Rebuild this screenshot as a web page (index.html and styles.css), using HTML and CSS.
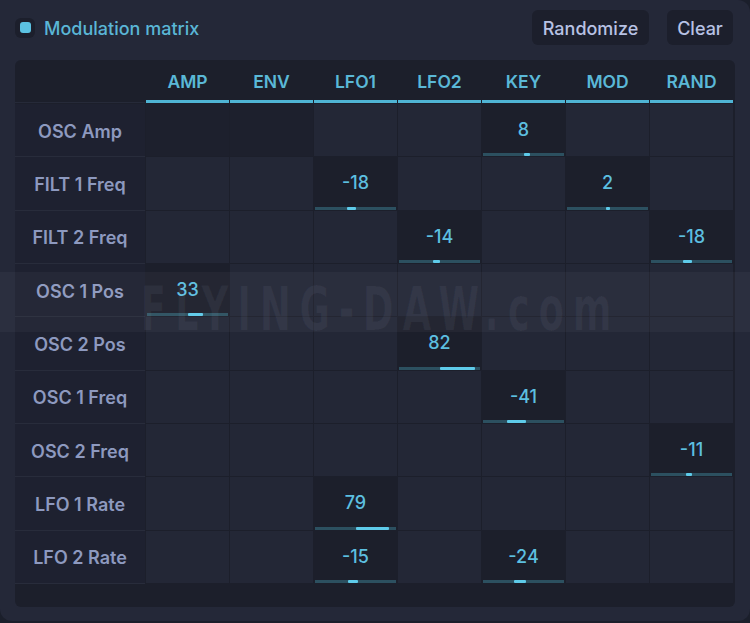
FILE: index.html
```html
<!DOCTYPE html>
<html>
<head>
<meta charset="utf-8">
<link rel="stylesheet" href="styles.css">
</head>
<body>
<div class="panel">
  <div class="topbar">
    <div class="title">
      <span class="led"><span class="led-dot"></span></span>
      <span class="title-text">Modulation matrix</span>
    </div>
    <div class="actions">
      <button class="btn btn-rand">Randomize</button>
      <button class="btn btn-clear">Clear</button>
    </div>
  </div>
  <div class="matrix">
    <div class="hcell corner"></div>
    <div class="hcell">AMP</div>
    <div class="hcell">ENV</div>
    <div class="hcell">LFO1</div>
    <div class="hcell">LFO2</div>
    <div class="hcell">KEY</div>
    <div class="hcell">MOD</div>
    <div class="hcell">RAND</div>

    <div class="label">OSC Amp</div>
    <div class="cell off"></div><div class="cell off"></div><div class="cell"></div><div class="cell"></div>
    <div class="cell on"><span class="val">8</span><span class="bar"><span class="fill" style="left:50%;width:calc(4% + 3px)"></span></span></div>
    <div class="cell"></div><div class="cell"></div>

    <div class="label">FILT 1 Freq</div>
    <div class="cell"></div><div class="cell"></div>
    <div class="cell on"><span class="val">-18</span><span class="bar"><span class="fill" style="right:50%;width:calc(9% + 1px)"></span></span></div>
    <div class="cell"></div><div class="cell"></div>
    <div class="cell on"><span class="val">2</span><span class="bar"><span class="fill" style="left:calc(50% - 2px);width:calc(1% + 4px)"></span></span></div>
    <div class="cell"></div>

    <div class="label">FILT 2 Freq</div>
    <div class="cell"></div><div class="cell"></div><div class="cell"></div>
    <div class="cell on"><span class="val">-14</span><span class="bar"><span class="fill" style="right:50%;width:calc(7% + 1px)"></span></span></div>
    <div class="cell"></div><div class="cell"></div>
    <div class="cell on"><span class="val">-18</span><span class="bar"><span class="fill" style="right:50%;width:calc(9% + 1px)"></span></span></div>

    <div class="label">OSC 1 Pos</div>
    <div class="cell on"><span class="val">33</span><span class="bar"><span class="fill" style="left:50%;width:calc(16.5% + 2px)"></span></span></div>
    <div class="cell"></div><div class="cell"></div><div class="cell"></div><div class="cell"></div><div class="cell"></div><div class="cell"></div>

    <div class="label">OSC 2 Pos</div>
    <div class="cell"></div><div class="cell"></div><div class="cell"></div>
    <div class="cell on"><span class="val">82</span><span class="bar"><span class="fill" style="left:50%;width:calc(41% + 2px)"></span></span></div>
    <div class="cell"></div><div class="cell"></div><div class="cell"></div>

    <div class="label">OSC 1 Freq</div>
    <div class="cell"></div><div class="cell"></div><div class="cell"></div><div class="cell"></div>
    <div class="cell on"><span class="val">-41</span><span class="bar"><span class="fill" style="right:calc(50% - 2px);width:calc(20.5% + 2px)"></span></span></div>
    <div class="cell"></div><div class="cell"></div>

    <div class="label">OSC 2 Freq</div>
    <div class="cell"></div><div class="cell"></div><div class="cell"></div><div class="cell"></div><div class="cell"></div><div class="cell"></div>
    <div class="cell on"><span class="val">-11</span><span class="bar"><span class="fill" style="right:50%;width:calc(5.5% + 1px)"></span></span></div>

    <div class="label">LFO 1 Rate</div>
    <div class="cell"></div><div class="cell"></div>
    <div class="cell on"><span class="val">79</span><span class="bar"><span class="fill" style="left:50%;width:calc(39.5% + 2px)"></span></span></div>
    <div class="cell"></div><div class="cell"></div><div class="cell"></div><div class="cell"></div>

    <div class="label">LFO 2 Rate</div>
    <div class="cell"></div><div class="cell"></div>
    <div class="cell on"><span class="val">-15</span><span class="bar"><span class="fill" style="right:calc(50% - 2px);width:calc(7.5% + 3px)"></span></span></div>
    <div class="cell"></div>
    <div class="cell on"><span class="val">-24</span><span class="bar"><span class="fill" style="right:calc(50% - 2px);width:calc(12% + 2px)"></span></span></div>
    <div class="cell"></div><div class="cell"></div>
  </div>
</div>
<div class="watermark"><span class="wm-text">FLYING-DAW.com</span></div>
</body>
</html>
```
FILE: styles.css
```css
html, body {
  margin: 0;
  padding: 0;
}
body {
  background: #1b1f2b;
  width: 750px;
  height: 623px;
  overflow: hidden;
  position: relative;
  font-family: Inter, "Noto Sans", "Liberation Sans", sans-serif;
}
.panel {
  width: 750px;
  height: 621px;
  background: #242838;
  border-radius: 0 12px 12px 12px;
  box-sizing: border-box;
  padding: 10px 15px 0 15px;
}
.topbar {
  display: flex;
  justify-content: space-between;
  align-items: center;
  height: 35px;
}
.title {
  display: flex;
  align-items: center;
  gap: 9px;
}
.led {
  width: 20px;
  height: 20px;
  border-radius: 6px;
  background: #1c1f2c;
  display: flex;
  align-items: center;
  justify-content: center;
}
.led-dot {
  width: 11px;
  height: 11px;
  border-radius: 3px;
  background: #5cc2e2;
}
.title-text {
  color: #5ab6d6;
  font-size: 18px;
  font-weight: 500;
  padding-top: 1px;
}
.actions {
  display: flex;
  gap: 18px;
  margin-right: 2px;
}
.btn {
  border: none;
  background: #1c1f2c;
  color: #b8c2e4;
  font-family: inherit;
  font-size: 18px;
  font-weight: 500;
  height: 35px;
  border-radius: 6px;
  padding: 2px 0 0 0;
}
.btn-rand { width: 117px; }
.btn-clear { width: 66px; }
.matrix {
  margin-top: 15px;
  width: 720px;
  height: 547px;
  box-sizing: border-box;
  background: #1c1f2b;
  border-radius: 6px;
  display: grid;
  grid-template-columns: 130px repeat(7, 83px);
  grid-template-rows: 43px repeat(9, 52.33px);
  column-gap: 1px;
  row-gap: 1px;
  align-content: start;
}
.hcell {
  display: flex;
  align-items: center;
  justify-content: center;
  color: #5ab8d7;
  font-size: 17.5px;
  font-weight: 600;
  border-bottom: 3px solid #4fb4d4;
  padding-top: 2px;
}
.hcell.corner {
  border-bottom: 1px solid #262a39;
}
.label {
  display: flex;
  align-items: center;
  justify-content: center;
  color: #8d99bf;
  font-size: 18px;
  font-weight: 600;
  background: #1e2130;
  box-shadow: 0 1px 0 #282c3b;
  padding-top: 2px;
  box-sizing: border-box;
}
.cell {
  background: #232736;
  display: flex;
  flex-direction: column;
}
.cell.off {
  background: #1d202d;
}
.cell.on {
  background: #1c1f2b;
}
.val {
  flex: 1;
  display: flex;
  align-items: center;
  justify-content: center;
  color: #5cbfe0;
  font-size: 18px;
  font-weight: 500;
  padding-top: 2px;
}
.bar {
  position: relative;
  height: 3px;
  margin: 0 1px;
  background: #2c5060;
}
.fill {
  position: absolute;
  top: 0;
  height: 3px;
  background: #5ecbea;
  border-radius: 1px;
}
.watermark {
  position: absolute;
  left: 0;
  top: 272px;
  width: 750px;
  height: 60px;
  background: rgba(255, 255, 255, 0.035);
  display: flex;
  align-items: flex-end;
  justify-content: center;
  pointer-events: none;
}
.wm-text {
  font-family: "DejaVu Sans", "Liberation Sans", sans-serif;
  font-weight: 700;
  font-size: 60px;
  letter-spacing: 14px;
  line-height: 46px;
  height: 46px;
  color: rgba(190, 200, 230, 0.06);
  transform: scaleX(0.62);
  white-space: nowrap;
  margin-left: 10px;
  margin-bottom: 0;
}
```
